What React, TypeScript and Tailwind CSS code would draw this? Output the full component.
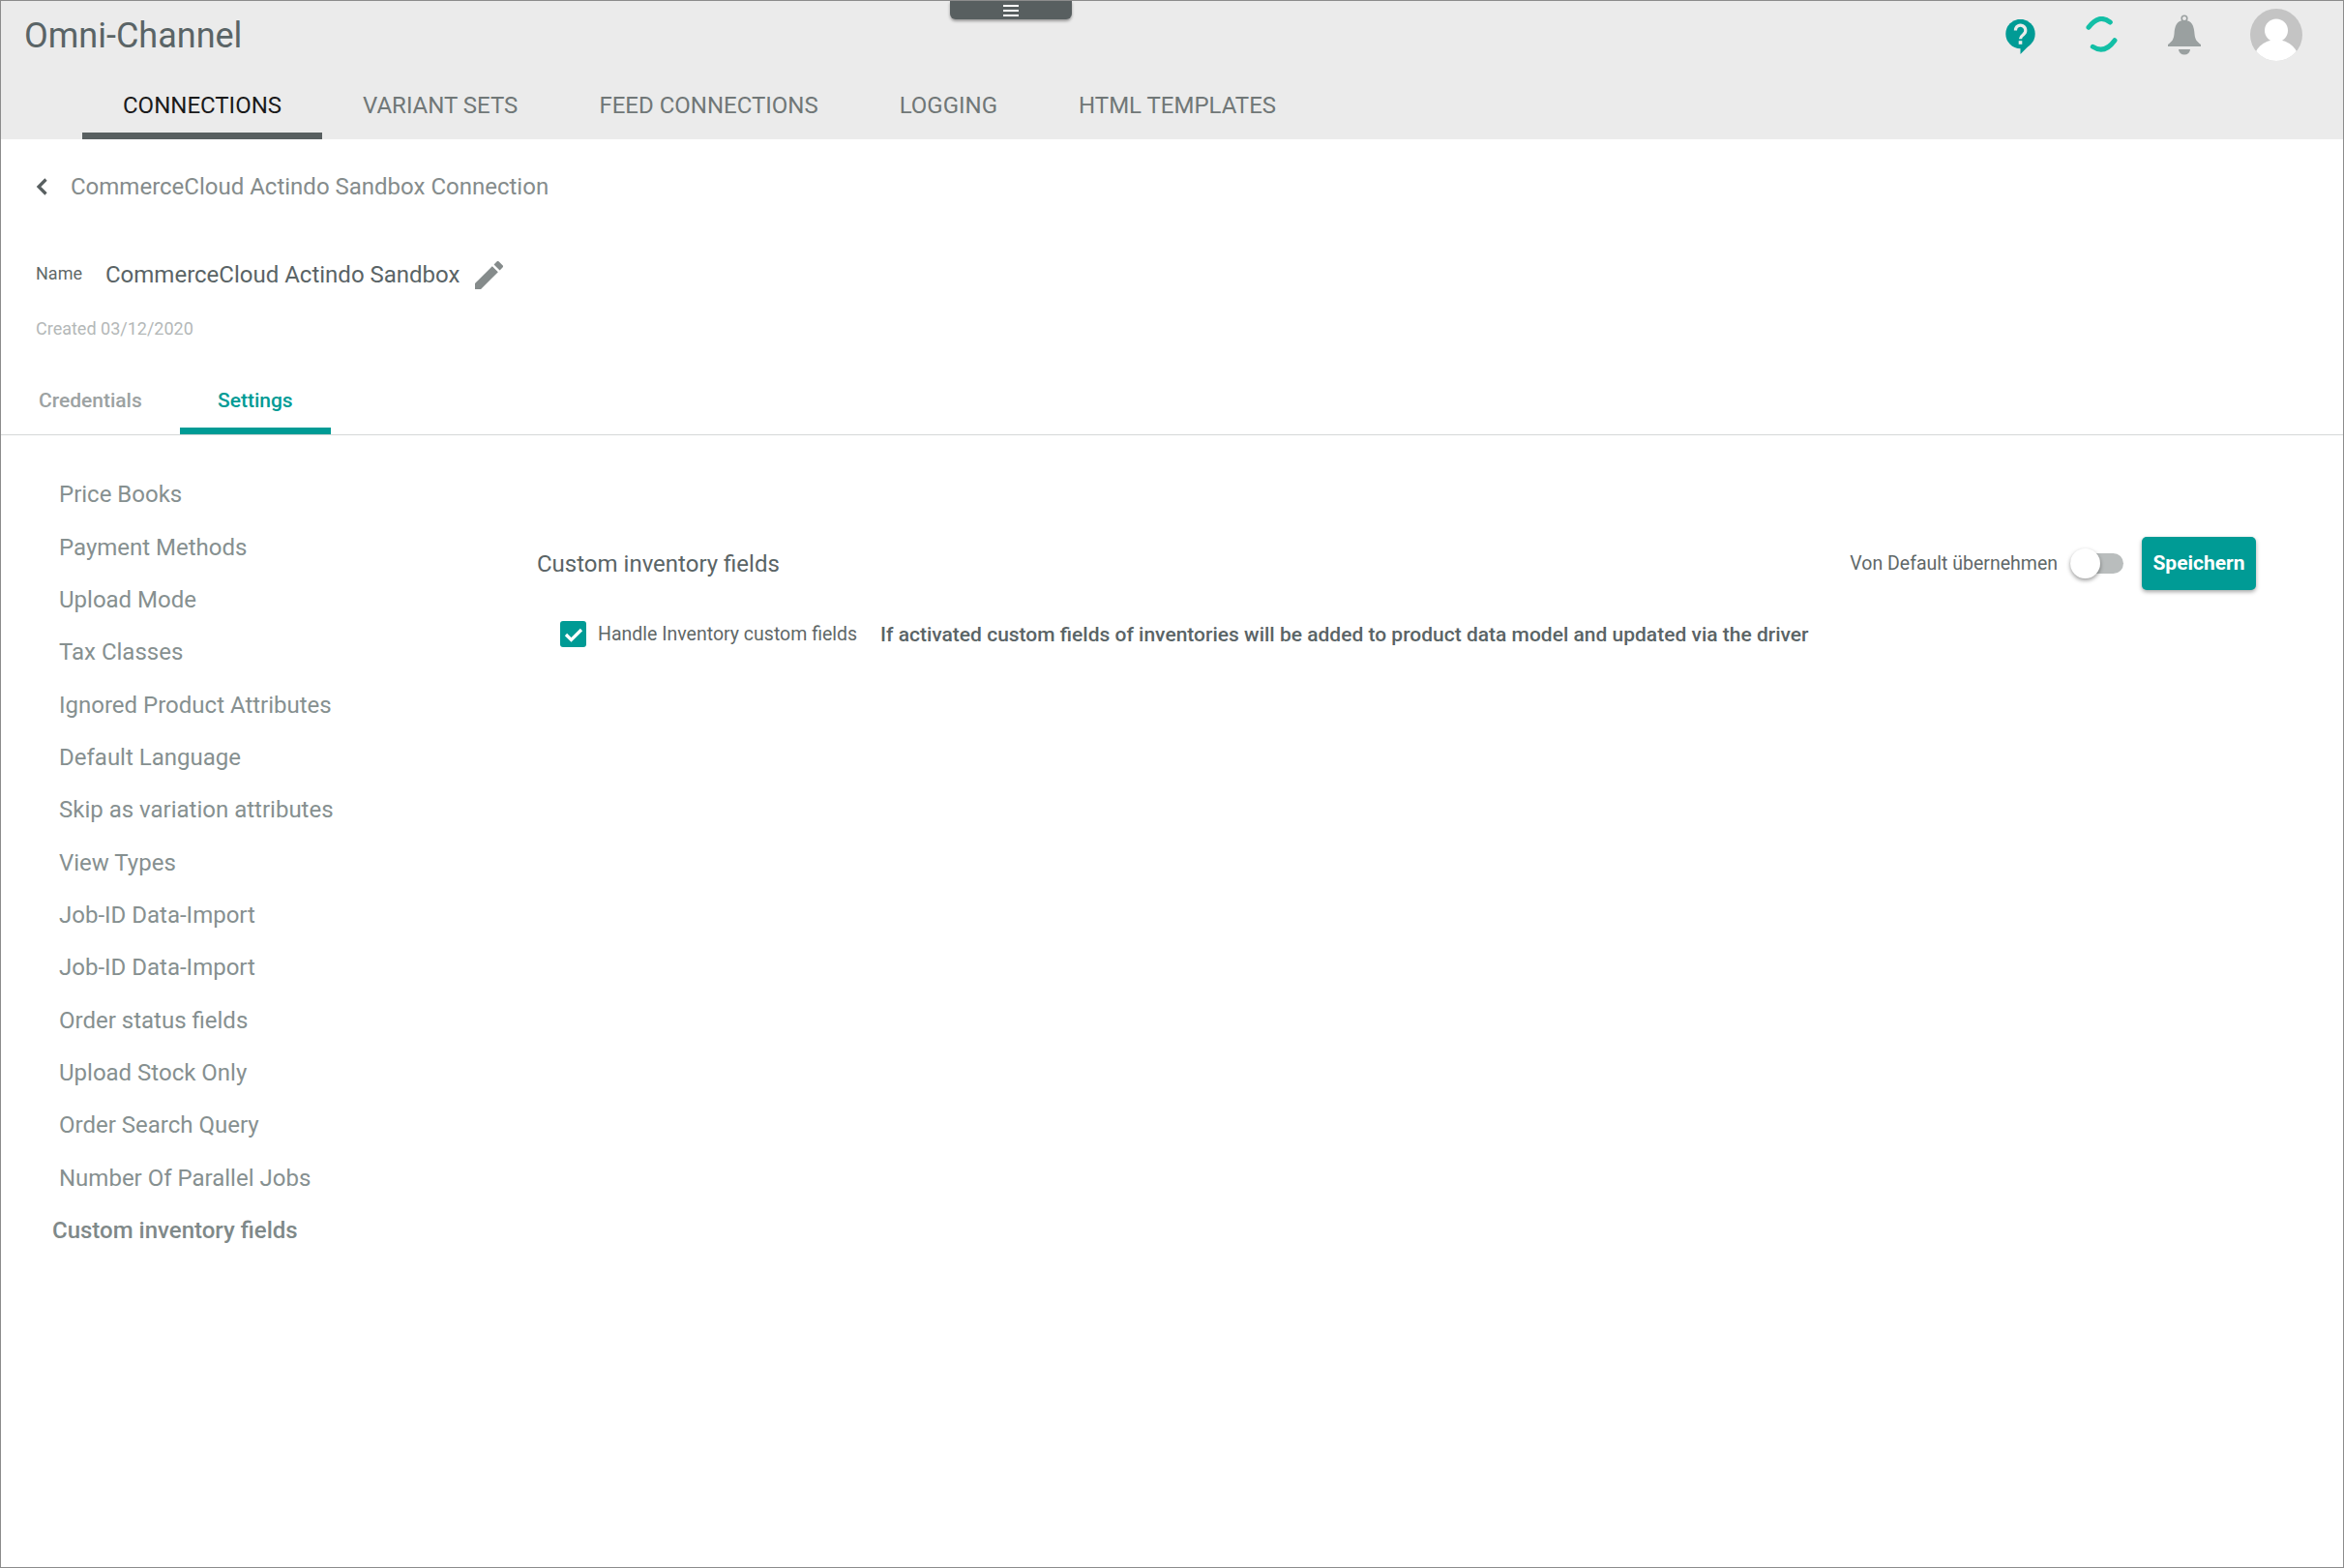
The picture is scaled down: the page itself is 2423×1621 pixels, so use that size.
import React from "react";

const tabs = ["CONNECTIONS", "VARIANT SETS", "FEED CONNECTIONS", "LOGGING", "HTML TEMPLATES"];

const menu = [
  "Price Books",
  "Payment Methods",
  "Upload Mode",
  "Tax Classes",
  "Ignored Product Attributes",
  "Default Language",
  "Skip as variation attributes",
  "View Types",
  "Job-ID Data-Import",
  "Job-ID Data-Import",
  "Order status fields",
  "Upload Stock Only",
  "Order Search Query",
  "Number Of Parallel Jobs",
];

const HelpIcon = () => (
  <svg width="31" height="36" viewBox="0 0 31 36" className="mt-[4px]">
    <circle cx="15.5" cy="15" r="15.2" fill="#009b95" />
    <path d="M15.5 28v8l10-10z" fill="#009b95" />
    <path d="M10.4 11.4a5.2 5.2 0 1 1 8.3 4.2c-2 1.5-3.2 2.2-3.2 4.6" fill="none" stroke="#ebebeb" strokeWidth="3.2" />
    <rect x="13.7" y="22.2" width="3.6" height="3.6" fill="#ebebeb" />
  </svg>
);

const SyncIcon = () => (
  <svg width="34" height="38" viewBox="0 0 34 38" className="ml-[52px]">
    <path d="M3 11.3Q13.85 -3.25 25.3 6" fill="none" stroke="#13bfa6" strokeWidth="5" strokeLinecap="round" />
    <path d="M30 24.7Q19.35 39.4 7.3 31.3" fill="none" stroke="#13bfa6" strokeWidth="5" strokeLinecap="round" />
  </svg>
);

const BellIcon = () => (
  <svg width="34" height="42" viewBox="0 0 34 42" className="ml-[51px]">
    <circle cx="17" cy="4" r="2.8" fill="none" stroke="#9aa0a0" strokeWidth="1.6" />
    <path
      d="M17 6C25 6 27 12 27.5 20C28 26 30 28 34 31V33H0V31C4 28 6 26 6.5 20C7 12 9 6 17 6Z"
      fill="#9aa0a0"
    />
    <path d="M11 36H23A6 5.5 0 0 1 11 36Z" fill="#9aa0a0" />
  </svg>
);

const Avatar = () => (
  <svg width="54" height="54" viewBox="0 0 54 54" className="ml-[51px]">
    <defs>
      <clipPath id="avatar-clip">
        <circle cx="27" cy="27" r="27" />
      </clipPath>
    </defs>
    <g clipPath="url(#avatar-clip)">
      <rect width="54" height="54" fill="#c4c4c4" />
      <circle cx="27" cy="22.5" r="12" fill="#fff" />
      <ellipse cx="27" cy="55" rx="24" ry="23" fill="#fff" />
    </g>
  </svg>
);

export default function App() {
  return (
    <div className="w-[2423px] h-[1621px] bg-white border border-[#8c8c8c] flex flex-col relative overflow-hidden font-['Roboto',sans-serif]">
      <div className="absolute left-[981px] top-0 w-[126px] h-[19px] bg-[#585f60] rounded-b-[6px] shadow-[0_2px_3px_rgba(0,0,0,0.35)] flex flex-col items-center justify-center gap-[3px]">
        <span className="w-[16px] h-[2px] bg-white" />
        <span className="w-[16px] h-[2px] bg-white" />
        <span className="w-[16px] h-[2px] bg-white" />
      </div>

      <header className="bg-[#ebebeb] h-[143px] shrink-0">
        <div className="h-[70px] flex items-center justify-between pl-[24px] pr-[42px]">
          <div className="text-[36px] text-[#5a6466] pt-[1px]">Omni-Channel</div>
          <div className="flex items-center">
            <HelpIcon />
            <SyncIcon />
            <BellIcon />
            <Avatar />
          </div>
        </div>
        <nav className="h-[73px] flex pl-[84px]">
          {tabs.map((t, i) => (
            <div
              key={t}
              className={
                i === 0
                  ? "h-full flex items-center px-[42px] pt-[9px] border-b-[7px] border-[#585f60] text-[24px] text-[#1a1a1a]"
                  : "h-full flex items-center px-[42px] pt-[9px] border-b-[7px] border-transparent text-[24px] text-[#707777]"
              }
            >
              {t}
            </div>
          ))}
        </nav>
      </header>

      <div className="pl-[36px] pt-[30px]">
        <div className="h-[38px] flex items-center">
          <svg width="12" height="18" viewBox="0 0 12 18">
            <path d="M10.5 1.5L3 9l7.5 7.5" fill="none" stroke="#585f60" strokeWidth="3.2" />
          </svg>
          <span className="ml-[24px] text-[24px] text-[#858c8c]">CommerceCloud Actindo Sandbox Connection</span>
        </div>
        <div className="mt-[52px] h-[40px] flex items-center">
          <span className="w-[72px] text-[18px] text-[#5f6868] mb-[3px]">Name</span>
          <span className="text-[24px] text-[#5a6466]">CommerceCloud Actindo Sandbox</span>
          <svg width="29" height="29" viewBox="3 3 18 18" className="ml-[16px]">
            <path
              d="M3 17.25V21h3.75L17.81 9.94l-3.75-3.75L3 17.25zM20.71 7.04a1 1 0 0 0 0-1.41l-2.34-2.34a1 1 0 0 0-1.41 0l-1.83 1.83 3.75 3.75 1.83-1.83z"
              fill="#858b8b"
            />
          </svg>
        </div>
        <div className="mt-[24px] text-[18px] leading-[24px] text-[#b4b8b8]">Created 03/12/2020</div>
      </div>

      <div className="mt-[34px] h-[64px] flex border-b border-[#d5d8d8] shrink-0">
        <div className="ml-[39px] h-[63px] flex items-center pt-[2px] border-b-[7px] border-transparent text-[21px] font-medium text-[#9ca2a2]">
          Credentials
        </div>
        <div className="ml-[39px] w-[156px] h-[63px] flex items-center justify-center pt-[2px] border-b-[7px] border-[#009b95] text-[21px] font-medium text-[#009b95]">
          Settings
        </div>
      </div>

      <div className="flex flex-1">
        <aside className="w-[554px] pt-[34px] shrink-0">
          {menu.map((m, i) => (
            <div key={i} className="h-[54.35px] flex items-center pl-[60px] text-[24px] text-[#869090]">
              {m}
            </div>
          ))}
          <div className="h-[54.35px] flex items-center pl-[53px] text-[24px] font-medium text-[#7f8989]">
            Custom inventory fields
          </div>
        </aside>

        <main className="flex-1 pr-[90px] pt-[105px]">
          <div className="h-[55px] flex items-center">
            <h2 className="text-[24px] text-[#5a6466]">Custom inventory fields</h2>
            <span className="ml-auto text-[19.5px] text-[#5f6868]">Von Default übernehmen</span>
            <div className="ml-[13px] relative w-[55px] h-[21px] rounded-full bg-[#b9bdbd]">
              <span className="absolute left-0 top-[-5px] w-[31px] h-[31px] rounded-full bg-white shadow-[0_2px_4px_rgba(0,0,0,0.4)]" />
            </div>
            <button className="ml-[19px] w-[118px] h-[55px] rounded-[5px] bg-[#009b95] text-white text-[21px] font-bold shadow-[0_2px_4px_rgba(0,0,0,0.35)]">
              Speichern
            </button>
          </div>
          <div className="mt-[32px] ml-[24px] h-[27px] flex items-center">
            <span className="w-[27px] h-[27px] rounded-[3px] bg-[#009b95] flex items-center justify-center">
              <svg width="20" height="16" viewBox="0 0 20 16">
                <path d="M2 8l5.5 5.5L18 3" fill="none" stroke="#fff" strokeWidth="3.2" />
              </svg>
            </span>
            <span className="ml-[12px] text-[19.5px] text-[#5f6868]">Handle Inventory custom fields</span>
            <span className="ml-[24px] mt-[2px] text-[21px] font-medium text-[#5a6466]">
              If activated custom fields of inventories will be added to product data model and updated via the driver
            </span>
          </div>
        </main>
      </div>
    </div>
  );
}
